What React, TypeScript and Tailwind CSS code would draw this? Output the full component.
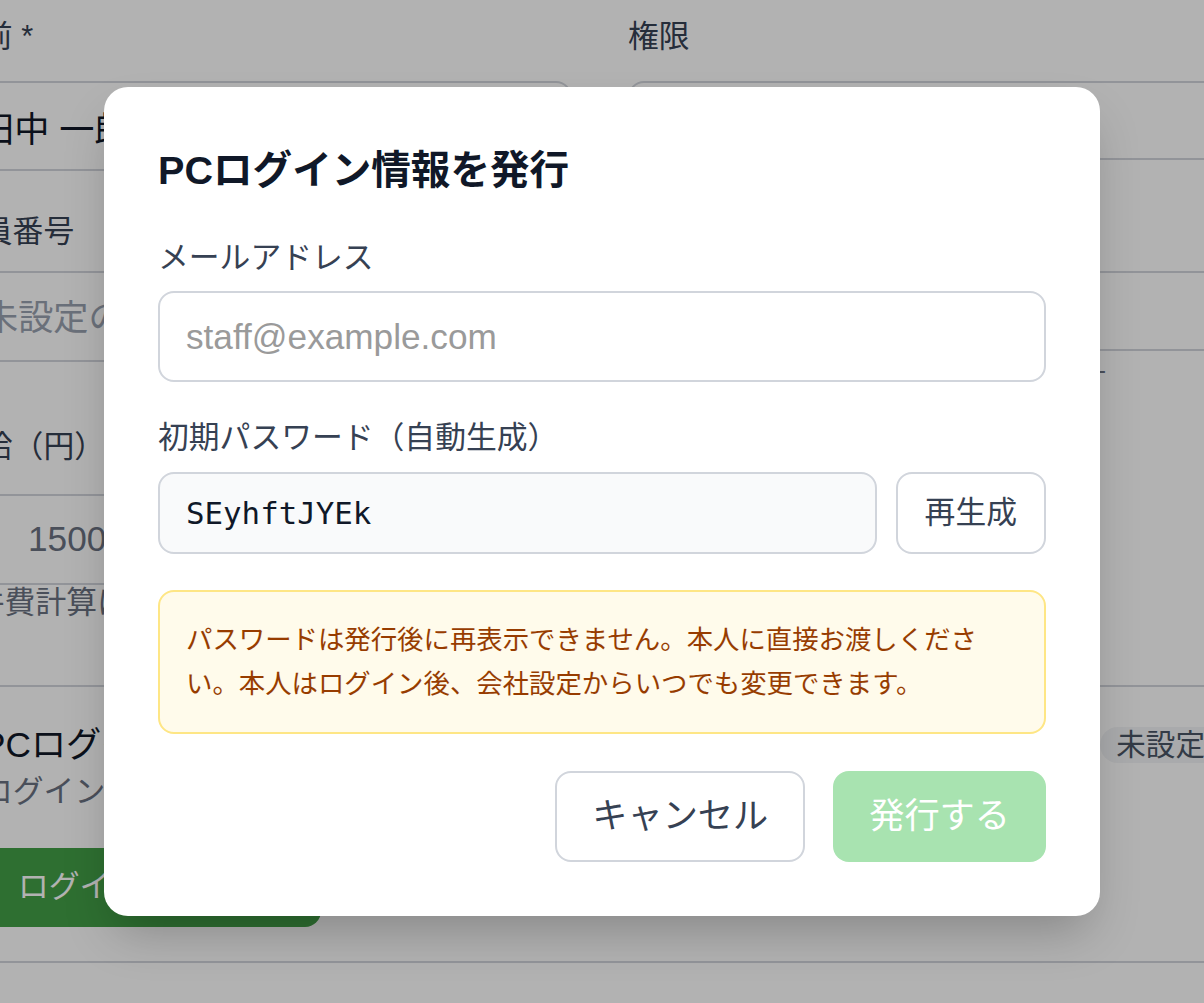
import { useState } from 'react';

function Label({ children }: { children: string }) {
  return <div className="h-[44px] text-[30.8px] leading-[44px] text-gray-700">{children}</div>;
}

function BackgroundForm() {
  return (
    <div className="ml-[-49px] w-[1298px] pt-[15px]">
      <div className="grid grid-cols-[621px_621px] gap-x-[56px]">
        <div className="flex flex-col">
          <Label>名前 *</Label>
          <div className="mt-[22px] flex h-[90px] items-center rounded-[16px] border-2 border-gray-300 px-[26px] pt-[8px] text-[35.2px] text-gray-900">
            田中 一郎
          </div>
          <div className="mt-[39px]">
            <Label>社員番号</Label>
          </div>
          <div className="mt-[17px] flex h-[91px] items-center rounded-[16px] border-2 border-gray-300 px-[30px] pt-[4px] text-[35.2px] text-gray-400">
            未設定の場合は自動採番
          </div>
          <div className="mt-[63px]">
            <Label>時給（円）</Label>
          </div>
          <div className="mt-[25px] flex h-[91px] items-center rounded-[16px] border-2 border-gray-300 pl-[75px] text-[35.2px] text-gray-500">
            1500
          </div>
          <p className="ml-[-8px] text-[30.8px] leading-[35px] text-gray-500">人件費計算に使用されます</p>
        </div>
        <div className="flex flex-col">
          <Label>権限</Label>
          <div className="mt-[22px] flex h-[79px] items-center rounded-[16px] border-2 border-gray-300 px-[26px] text-[30.8px] text-gray-900">
            スタッフ
          </div>
          <div className="mt-[50px]">
            <Label>雇用形態</Label>
          </div>
          <div className="mt-[17px] flex h-[80px] items-center rounded-[16px] border-2 border-gray-300 px-[26px] text-[30.8px] text-gray-900">
            アルバイト
          </div>
          <div className="mt-[1px] w-[478px] text-right text-[26.4px] leading-[36px] text-gray-500">
            勤務形態に応じて設定してください -
          </div>
        </div>
      </div>

      <div className="mt-[65px] rounded-[24px] border-2 border-gray-300 pt-[36px] pr-[26px] pb-[34px] pl-[29px]">
        <div className="flex items-center justify-between">
          <div className="text-[35.2px] leading-[44px] text-gray-900">PCログイン情報</div>
          <span className="rounded-full bg-gray-100 px-[16px] text-[29.6px] leading-[36px] text-gray-600">未設定</span>
        </div>
        <p className="mt-[3px] text-[30.8px] leading-[44px] text-gray-500">ログイン情報が発行されていません</p>
        <button className="mt-[34px] h-[79px] rounded-[16px] bg-[#43a047] pr-[26px] pl-[36px] text-[30.8px] text-white">
          ログイン情報を発行
        </button>
      </div>
    </div>
  );
}

export default function App() {
  const [password] = useState('SEyhftJYEk');

  return (
    <div className="relative h-[1003px] w-[1204px] overflow-hidden bg-white font-['Liberation_Sans','Noto_Sans_CJK_JP',sans-serif]">
      <BackgroundForm />

      <div className="absolute inset-0 flex items-center justify-center bg-black/30">
        <div className="w-[996px] rounded-[24px] bg-white px-[54px] pt-[53px] pb-[54px] shadow-2xl">
          <h2 className="text-[39.6px] leading-[61.6px] font-bold text-gray-900">PCログイン情報を発行</h2>

          <div className="mt-[35px]">
            <Label>メールアドレス</Label>
            <input
              className="mt-[11px] block h-[91px] w-full rounded-[16px] border-2 border-gray-300 bg-white px-[26px] text-[35.2px] text-gray-900 outline-none placeholder:text-[#9a9a9a]"
              placeholder="staff@example.com"
              type="email"
            />
          </div>

          <div className="mt-[34px]">
            <Label>初期パスワード（自動生成）</Label>
            <div className="mt-[12px] flex gap-[19px]">
              <input
                className="block h-[82px] min-w-0 flex-1 rounded-[16px] border-2 border-gray-300 bg-gray-50 px-[26px] font-['DejaVu_Sans_Mono',monospace] text-[30.8px] text-gray-900 outline-none"
                readOnly
                value={password}
              />
              <button className="h-[82px] rounded-[16px] border-2 border-gray-300 bg-white px-[27px] text-[30.8px] text-gray-700">
                再生成
              </button>
            </div>
          </div>

          <div className="mt-[36px] rounded-[16px] border-2 border-amber-200 bg-amber-50 px-[26px] py-[26px] text-[26.4px] leading-[44px] text-amber-800">
            パスワードは発行後に再表示できません。本人に直接お渡しください。本人はログイン後、会社設定からいつでも変更できます。
          </div>

          <div className="mt-[37px] flex justify-end gap-[28px]">
            <button className="h-[91px] rounded-[16px] border-2 border-gray-300 bg-white px-[35px] text-[35.2px] text-gray-700">
              キャンセル
            </button>
            <button className="h-[91px] rounded-[16px] bg-[#a8e3b0] px-[36px] text-[35.2px] text-white" disabled>
              発行する
            </button>
          </div>
        </div>
      </div>
    </div>
  );
}
